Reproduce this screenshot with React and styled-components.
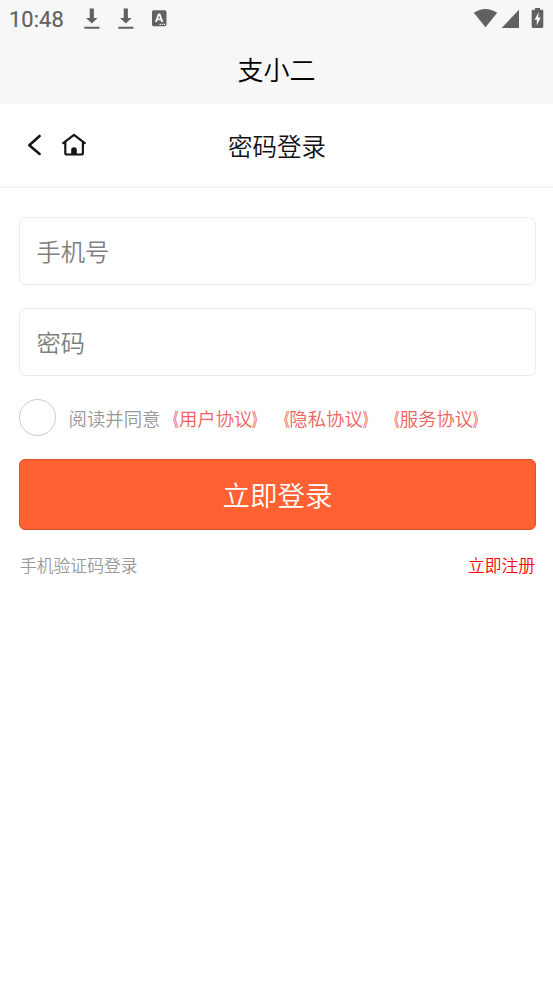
import React from "react";
import styled, { createGlobalStyle } from "styled-components";

const GlobalStyle = createGlobalStyle`
  * { box-sizing: border-box; }
  body {
    margin: 0;
    background: #fff;
    font-family: "Noto Sans CJK SC", sans-serif;
    font-weight: 350;
    text-spacing-trim: space-all;
  }
`;

const Screen = styled.div`
  display: flex;
  flex-direction: column;
  width: 100%;
  height: 984px;
  overflow: hidden;
  background: #fff;
`;

const TopArea = styled.header`
  height: 104px;
  background: #f7f7f7;
`;

const StatusBar = styled.div`
  display: flex;
  align-items: center;
  justify-content: space-between;
  height: 37px;
  padding: 0 9px;
  color: #616161;
`;

const Clock = styled.span`
  width: 73px;
  font: 400 21.8px/37px Roboto, sans-serif;
  letter-spacing: 0.1px;
  padding-top: 2px;
  -webkit-text-stroke: 0.2px #616161;
`;

const StatusGroup = styled.div`
  display: flex;
  align-items: center;
  height: 37px;
  svg { display: block; flex: none; }
`;

const AppTitle = styled.h1`
  margin: 0;
  height: 67px;
  font-size: 26px;
  font-weight: 350;
  line-height: 63px;
  text-align: center;
  color: #000;
`;

const NavBar = styled.nav`
  display: grid;
  grid-template-columns: 100px 1fr 100px;
  align-items: center;
  height: 84px;
  padding-top: 2px;
  border-bottom: 2px solid #f4f4f4;
`;

const NavIcons = styled.div`
  display: flex;
  padding-left: 20px;
  svg { display: block; }
`;

const NavTitle = styled.h2`
  margin: 0;
  padding-left: 1px;
  font-size: 24.5px;
  font-weight: 350;
  line-height: 36px;
  text-align: center;
  color: #111;
`;

const Form = styled.form`
  display: flex;
  flex-direction: column;
  padding: 29px 17px 0 19px;
`;

const Field = styled.input`
  width: 100%;
  height: 68px;
  margin-bottom: 23px;
  padding: 0 16px 2px 16.5px;
  border: 1.5px solid #ebebeb;
  border-radius: 7px;
  outline: none;
  background: #fff;
  font: 350 24.3px "Noto Sans CJK SC", sans-serif;
  color: #333;
  &::placeholder { color: #808080; opacity: 1; }
`;

const Agreement = styled.label`
  display: flex;
  align-items: center;
  height: 37px;
  font-size: 18.4px;
  line-height: 37px;
  white-space: nowrap;
  color: #999;
`;

const Radio = styled.span`
  flex: none;
  width: 37px;
  height: 37px;
  margin-right: 12.5px;
  border: 1.5px solid #ccc;
  border-radius: 50%;
`;

const AgreementText = styled.span`
  padding-top: 2px;
`;

const PolicyLink = styled.span`
  color: #f0625f;
`;

const Bracket = styled.span`
  display: inline-block;
  transform: scaleX(0.58);
  transform-origin: ${(p) => (p.$open ? "right" : "left")} center;
  -webkit-text-stroke: 0.3px #f0625f;
`;

const Submit = styled.button`
  height: 71px;
  margin: 23px 0 0;
  padding: 0;
  border: 1px solid #d4532f;
  border-radius: 6px;
  background: #ff6132;
  font: 350 27.5px/67px "Noto Sans CJK SC", sans-serif;
  color: #fff;
`;

const Links = styled.div`
  display: flex;
  justify-content: space-between;
  margin-top: 22px;
  padding: 0 1px;
  font-size: 16.8px;
  line-height: 26px;
`;

const TextLink = styled.span`
  color: ${(p) => p.$color};
`;

const Policy = ({ children }) => (
  <PolicyLink>
    <Bracket $open>《</Bracket>
    {children}
    <Bracket>》</Bracket>
  </PolicyLink>
);

const Download = ({ width }) => (
  <svg width={width} height="37" viewBox={`0 0 ${width} 37`} fill="#616161">
    <path d="M7.7 8.5h4.2v9.4h3.7l-5.8 5.7L4 17.9h3.7zM2.3 26.8h15.2v2H2.3z" />
  </svg>
);

const Keyboard = () => (
  <svg width="17" height="37" viewBox="0 0 17 37">
    <rect x="1" y="10.2" width="14.5" height="16" rx="1.6" fill="#616161" />
    <path
      d="M7 13.5h2.3l3 8.5h-2.1l-.6-1.8H6.6L6 22H3.9zM7.1 18.6h2L8.1 15.5z"
      fill="#f7f7f7"
      fillRule="evenodd"
    />
    <path d="M8.5 23.7H10v1.2H8.5zm2.5 0h1.3v1.2H11zm2.2 0h1.2v1.2h-1.2z" fill="#f7f7f7" />
  </svg>
);

const Signals = () => (
  <svg width="72" height="37" viewBox="472 0 72 37" fill="#616161">
    <path d="M473.8 12.8q11.7-7.6 23.4 0L485.5 27.2z" />
    <path d="M519 9.8V28h-17.3z" />
    <path d="M535 8h5v1.8h2q1.3 0 1.3 1.3v15.5q0 1.3-1.3 1.3h-9q-1.3 0-1.3-1.3V11.1q0-1.3 1.3-1.3h2z" />
    <path d="m538.8 12-4.3 7.8h2.3v5.4l4-7.8h-2.6z" fill="#f7f7f7" />
  </svg>
);

const Back = () => (
  <svg width="40" height="36" viewBox="20 128 40 36">
    <path d="m39.6 136-10.3 9.2 10.3 8.7" fill="none" stroke="#151515" strokeWidth="2.6" strokeLinecap="round" strokeLinejoin="round" />
  </svg>
);

const Home = () => (
  <svg width="32" height="36" viewBox="60 128 32 36">
    <path
      d="M63.2 143.2 74 134.9l10.8 8.3M65.3 142v11q0 1.5 1.5 1.5h14.6q1.5 0 1.5-1.5v-11"
      fill="none"
      stroke="#151515"
      strokeWidth="2.2"
      strokeLinecap="round"
      strokeLinejoin="round"
    />
    <path d="M71.2 154.5v-4.4a2.8 2.8 0 0 1 5.6 0v4.4z" fill="#151515" />
  </svg>
);

export default function App() {
  return (
    <Screen>
      <GlobalStyle />
      <TopArea>
        <StatusBar>
          <StatusGroup>
            <Clock>10:48</Clock>
            <Download width={34} />
            <Download width={35} />
            <Keyboard />
          </StatusGroup>
          <StatusGroup>
            <Signals />
          </StatusGroup>
        </StatusBar>
        <AppTitle>支小二</AppTitle>
      </TopArea>
      <NavBar>
        <NavIcons>
          <Back />
          <Home />
        </NavIcons>
        <NavTitle>密码登录</NavTitle>
      </NavBar>
      <Form>
        <Field placeholder="手机号" />
        <Field placeholder="密码" type="password" />
        <Agreement>
          <Radio />
          <AgreementText>
            阅读并同意
            <Policy>用户协议</Policy>
            <Policy>隐私协议</Policy>
            <Policy>服务协议</Policy>
          </AgreementText>
        </Agreement>
        <Submit type="button">立即登录</Submit>
        <Links>
          <TextLink $color="#999">手机验证码登录</TextLink>
          <TextLink $color="#f00">立即注册</TextLink>
        </Links>
      </Form>
    </Screen>
  );
}
